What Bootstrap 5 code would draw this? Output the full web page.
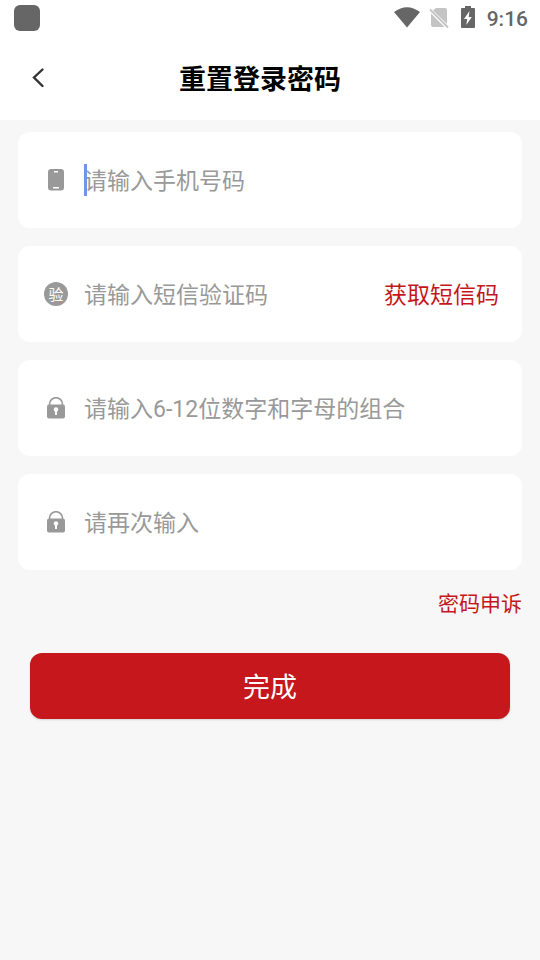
<!DOCTYPE html>
<html lang="zh-CN">
<head>
<meta charset="utf-8">
<meta name="viewport" content="width=device-width, initial-scale=1">
<title>重置登录密码</title>
<link href="https://cdn.jsdelivr.net/npm/bootstrap@5.3.0/dist/css/bootstrap.min.css" rel="stylesheet">
<style>
  body { background: #f7f7f7; color: #000; font-family: Roboto, "Noto Sans CJK SC", sans-serif; }
  .status-bar { height: 36px; padding: 0 12px 0 14px; color: #666; }
  .status-app { width: 26px; height: 26px; border-radius: 6px; background: #666; }
  .status-time { font-size: 21px; line-height: 24px; font-weight: 500; margin-left: 9px; padding-top: 2px; }
  .title-bar { height: 84px; }
  .back-btn { width: 60px; height: 60px; padding: 0 0 0 16px; }
  .page-title { font-size: 27px; line-height: 40px; font-weight: 700; padding: 3px 80px 0 0; }
  .reset-form { padding: 12px 18px; }
  .field-list { gap: 18px; }
  .field-card { height: 96px; border-radius: 12px; padding: 0 23px 0 26px; }
  .field-icon { width: 24px; color: #999; }
  .field-box { margin-left: 16px; }
  .field-input, .field-input:focus { font-size: 23px; line-height: 36px; padding: 4px 0 0; border: 0; border-radius: 0; background: transparent; box-shadow: none; }
  .field-input::placeholder { color: #999; opacity: 1; }
  .caret { left: 0; top: 4px; width: 3px; height: 32px; background: #6b96ec; }
  .code-btn { font-size: 23px; line-height: 36px; padding: 4px 0 0; }
  .brand-red, .brand-red:hover { color: #c3171c; }
  .appeal-link { font-size: 21px; line-height: 32px; margin-top: 18px; }
  .submit-wrap { padding: 33px 12px 0; }
  .submit-btn, .submit-btn:hover { height: 66px; border: 0; border-radius: 12px; padding: 4px 0 0; font-size: 27px; line-height: 40px; color: #fff; background: #c5171c; box-shadow: 0 1px 2px rgba(0, 0, 0, .15); }
</style>
</head>
<body>
<header class="bg-white">
  <div class="status-bar d-flex align-items-center">
    <span class="status-app me-auto"></span>
    <svg width="26" height="22" viewBox="0 0 26 22" aria-hidden="true"><path d="M0 5Q13-4.500 26 5L13 20.500Z" fill="#666"/></svg>
    <svg class="ms-2" width="22" height="22" viewBox="0 0 22 22" aria-hidden="true"><path d="M8 1H17Q19 1 19 3V17L5 3.500ZM3 6.500 16.500 20H5Q3 20 3 18Z" fill="#c4c4c4"/><path d="M2 2.500 20 20.500" stroke="#c4c4c4" stroke-width="1.800"/></svg>
    <svg class="ms-2" width="20" height="24" viewBox="0 0 20 24" aria-hidden="true"><path d="M7 0H13V2H16Q17 2 17 3V21Q17 22 16 22H4Q3 22 3 21V3Q3 2 4 2H7Z" fill="#666"/><path d="M11.500 5 6 13H9.200L8.300 19 13.800 11H10.700Z" fill="#fff"/></svg>
    <span class="status-time">9:16</span>
  </div>
  <nav class="title-bar d-flex align-items-center" aria-label="页面导航">
    <button type="button" class="back-btn btn border-0" aria-label="返回"><svg class="d-block mx-auto" width="14" height="22" viewBox="0 0 14 22" fill="none" stroke="#333" stroke-width="2.400" stroke-linecap="round"><path d="M11.500 2.500 3 10.500 11.500 19"/></svg></button>
    <h1 class="page-title flex-grow-1 text-center mb-0">重置登录密码</h1>
  </nav>
</header>
<main>
  <form class="reset-form">
    <div class="field-list d-flex flex-column">
      <div class="field-card bg-white d-flex align-items-center">
        <label class="field-icon d-flex justify-content-center" for="phone" aria-label="手机号码"><svg width="16" height="22" viewBox="0 0 16 22"><rect width="16" height="21.500" rx="3" fill="currentColor"/><path d="M6 2.800H10M5 18.800H11" stroke="#fff" stroke-width="1.400"/></svg></label>
        <div class="field-box position-relative flex-grow-1">
          <input id="phone" type="tel" class="field-input form-control" placeholder="请输入手机号码">
          <span class="caret position-absolute"></span>
        </div>
      </div>
      <div class="field-card bg-white d-flex align-items-center">
        <label class="field-icon d-flex justify-content-center" for="code" aria-label="短信验证码"><svg width="24" height="24" viewBox="0 0 24 24"><circle cx="12" cy="12" r="12" fill="currentColor"/><text x="12" y="17.500" text-anchor="middle" font-size="15" fill="#fff">验</text></svg></label>
        <div class="field-box flex-grow-1"><input id="code" type="text" class="field-input form-control" placeholder="请输入短信验证码"></div>
        <button type="button" class="code-btn btn brand-red border-0 text-nowrap">获取短信码</button>
      </div>
      <div class="field-card bg-white d-flex align-items-center">
        <label class="field-icon d-flex justify-content-center" for="password" aria-label="新密码"><svg width="20" height="22" viewBox="0 0 20 22"><path d="M3.500 9V7.200A6.500 6.500 0 0 1 16.500 7.200V9" fill="none" stroke="currentColor" stroke-width="1.600"/><rect x="1" y="7.500" width="18" height="14" rx="2" fill="currentColor"/><circle cx="10" cy="12.500" r="2.200" fill="#fff"/><path d="M10 13V18" stroke="#fff" stroke-width="2"/></svg></label>
        <div class="field-box flex-grow-1"><input id="password" type="password" class="field-input form-control" placeholder="请输入6-12位数字和字母的组合"></div>
      </div>
      <div class="field-card bg-white d-flex align-items-center">
        <label class="field-icon d-flex justify-content-center" for="confirm" aria-label="确认密码"><svg width="20" height="22" viewBox="0 0 20 22"><path d="M3.500 9V7.200A6.500 6.500 0 0 1 16.500 7.200V9" fill="none" stroke="currentColor" stroke-width="1.600"/><rect x="1" y="7.500" width="18" height="14" rx="2" fill="currentColor"/><circle cx="10" cy="12.500" r="2.200" fill="#fff"/><path d="M10 13V18" stroke="#fff" stroke-width="2"/></svg></label>
        <div class="field-box flex-grow-1"><input id="confirm" type="password" class="field-input form-control" placeholder="请再次输入"></div>
      </div>
    </div>
    <div class="d-flex justify-content-end"><a href="#" class="appeal-link brand-red text-decoration-none">密码申诉</a></div>
    <div class="submit-wrap"><button type="submit" class="submit-btn btn w-100">完成</button></div>
  </form>
</main>
<script src="https://cdn.jsdelivr.net/npm/bootstrap@5.3.0/dist/js/bootstrap.bundle.min.js"></script>
</body>
</html>
